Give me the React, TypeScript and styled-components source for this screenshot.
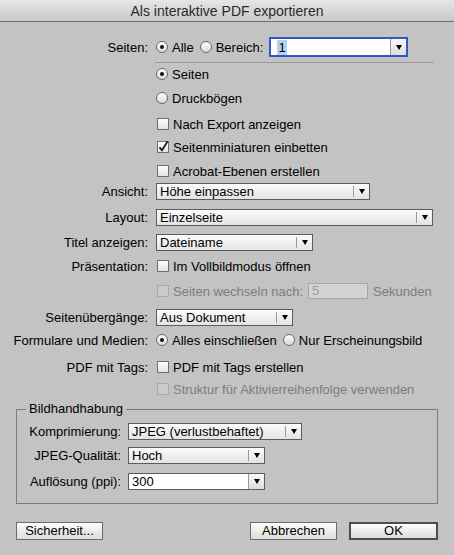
import React from 'react';
import styled, { createGlobalStyle } from 'styled-components';

const GlobalStyle = createGlobalStyle`
  body {
    margin: 0;
    background: #c3c3c3;
    font-family: "Liberation Sans", Arial, sans-serif;
    font-size: 13px;
    color: #000;
  }
`;

const Dialog = styled.div`
  width: 454px;
  height: 555px;
  background: #c3c3c3;
  overflow: hidden;
`;

const TitleBar = styled.div`
  height: 21px;
  border-bottom: 1px solid #6f6f6f;
  background: linear-gradient(#e6e6e6, #c9c9c9);
  display: flex;
  align-items: center;
  justify-content: center;
  font-size: 14px;
  color: #2a2a2a;
`;

const Body = styled.div`
  padding-top: 15px;
`;

const Row = styled.div<{ $mt?: number; $h?: number }>`
  display: grid;
  grid-template-columns: 148px 1fr;
  column-gap: 8px;
  align-items: center;
  height: ${p => p.$h ?? 20}px;
  margin-top: ${p => p.$mt ?? 0}px;
`;

const GroupRow = styled(Row)`
  grid-template-columns: 104px 1fr;
  column-gap: 7px;
`;

const Label = styled.div`
  text-align: right;
  white-space: nowrap;
`;

const Controls = styled.div<{ $gap?: number }>`
  display: flex;
  align-items: center;
  gap: ${p => p.$gap ?? 6}px;
  white-space: nowrap;
`;

const Separator = styled.div`
  margin: 5px 20px 0 155px;
  border-top: 1px solid #999;
`;

const Option = styled.label<{ $disabled?: boolean }>`
  display: inline-flex;
  align-items: center;
  gap: 4px;
  color: ${p => (p.$disabled ? '#7d7d7d' : '#000')};
`;

const RadioCircle = styled.span`
  width: 10px;
  height: 10px;
  border: 1px solid #6a6a6a;
  border-radius: 50%;
  background: linear-gradient(#fdfdfd, #dadada);
  display: inline-flex;
  align-items: center;
  justify-content: center;
  flex-shrink: 0;
`;

const RadioDot = styled.span`
  width: 4px;
  height: 4px;
  border-radius: 50%;
  background: #111;
`;

const CheckBox = styled.span<{ $disabled?: boolean }>`
  width: 10px;
  height: 10px;
  margin-left: 1px;
  border: 1px solid ${p => (p.$disabled ? '#a9a9a9' : '#6e6e6e')};
  background: ${p => (p.$disabled ? '#cbcbcb' : 'linear-gradient(#fdfdfd, #e2e2e2)')};
  display: inline-flex;
  flex-shrink: 0;
  overflow: visible;
`;

const SelectBox = styled.div<{ $w: number; $white?: boolean }>`
  width: ${p => p.$w}px;
  height: 17px;
  box-sizing: border-box;
  border: 1px solid #5c5c5c;
  background: ${p => (p.$white ? '#fff' : 'linear-gradient(#fbfbfb, #e4e4e4)')};
  display: flex;
  align-items: center;
`;

const SelectText = styled.span`
  flex: 1;
  padding-left: 3px;
  white-space: nowrap;
  overflow: hidden;
`;

const ArrowPart = styled.span<{ $filled?: boolean }>`
  width: 15px;
  align-self: stretch;
  margin: ${p => (p.$filled ? '0' : '2px 0')};
  border-left: 1px solid #9a9a9a;
  background: ${p => (p.$filled ? 'linear-gradient(#f8f8f8, #dedede)' : 'transparent')};
  display: flex;
  align-items: center;
  justify-content: center;
`;

const Triangle = styled.span`
  width: 0;
  height: 0;
  border-left: 3.5px solid transparent;
  border-right: 3.5px solid transparent;
  border-top: 5px solid #000;
`;

const RangeField = styled.div`
  width: 139px;
  height: 20px;
  box-sizing: border-box;
  border: 2px solid #3257c8;
  background: #fff;
  display: flex;
  align-items: center;
`;

const Selected = styled.span`
  margin-left: 3px;
  padding: 0 1px;
  background: #b7cff5;
`;

const SecondsField = styled.div`
  width: 60px;
  height: 16px;
  box-sizing: border-box;
  border: 1px solid #a6a6a6;
  background: #d3d3d3;
  color: #9a9a9a;
  padding-left: 3px;
  line-height: 14px;
`;

const Muted = styled.span`
  color: #7d7d7d;
`;

const Group = styled.fieldset`
  margin: 2px 16px 0;
  padding: 4px 0 12px;
  border: 1px solid #7c7c7c;
  min-width: 0;
`;

const Legend = styled.legend`
  margin-left: 9px;
  padding: 0 3px;
  line-height: 16px;
`;

const ButtonBar = styled.div`
  display: flex;
  align-items: center;
  padding: 18px 16px 0;
  gap: 12px;
`;

const Button = styled.button<{ $w: number; $default?: boolean; $push?: boolean }>`
  width: ${p => p.$w}px;
  height: 18px;
  box-sizing: border-box;
  padding: 0;
  margin-left: ${p => (p.$push ? 'auto' : '0')};
  border: ${p => (p.$default ? '2px solid #4d4d4d' : '1px solid #6c6c6c')};
  border-radius: 0;
  background: linear-gradient(#fdfdfd, #dcdcdc);
  font-family: "Liberation Sans", Arial, sans-serif;
  font-size: 13px;
  color: #000;
  line-height: 14px;
`;

const Radio: React.FC<{ checked?: boolean; children: React.ReactNode }> = ({ checked, children }) => (
  <Option>
    <RadioCircle>{checked && <RadioDot />}</RadioCircle>
    {children}
  </Option>
);

const Check: React.FC<{ checked?: boolean; disabled?: boolean; children: React.ReactNode }> = ({
  checked,
  disabled,
  children,
}) => (
  <Option $disabled={disabled}>
    <CheckBox $disabled={disabled}>
      {checked && (
        <svg width="10" height="10" viewBox="0 0 10 10" style={{ overflow: 'visible' }}>
          <path d="M1.5 5.2 L4 8.3 L9.6 -0.6" fill="none" stroke="#111" strokeWidth="1.7" />
        </svg>
      )}
    </CheckBox>
    {children}
  </Option>
);

const Select: React.FC<{ w: number; value: string; white?: boolean }> = ({ w, value, white }) => (
  <SelectBox $w={w} $white={white}>
    <SelectText>{value}</SelectText>
    <ArrowPart $filled={white}>
      <Triangle />
    </ArrowPart>
  </SelectBox>
);

export default function App() {
  return (
    <Dialog>
      <GlobalStyle />
      <TitleBar>Als interaktive PDF exportieren</TitleBar>
      <Body>
        <Row>
          <Label>Seiten:</Label>
          <Controls>
            <Radio checked>Alle</Radio>
            <Radio>Bereich:</Radio>
            <RangeField>
              <SelectText>
                <Selected>1</Selected>
              </SelectText>
              <ArrowPart $filled>
                <Triangle />
              </ArrowPart>
            </RangeField>
          </Controls>
        </Row>
        <Separator />
        <Row $mt={1}>
          <span />
          <Controls>
            <Radio checked>Seiten</Radio>
          </Controls>
        </Row>
        <Row $mt={4}>
          <span />
          <Controls>
            <Radio>Druckbögen</Radio>
          </Controls>
        </Row>
        <Row $mt={6}>
          <span />
          <Controls>
            <Check>Nach Export anzeigen</Check>
          </Controls>
        </Row>
        <Row $mt={3}>
          <span />
          <Controls>
            <Check checked>Seitenminiaturen einbetten</Check>
          </Controls>
        </Row>
        <Row $mt={4}>
          <span />
          <Controls>
            <Check>Acrobat-Ebenen erstellen</Check>
          </Controls>
        </Row>
        <Row>
          <Label>Ansicht:</Label>
          <Controls>
            <Select w={214} value="Höhe einpassen" />
          </Controls>
        </Row>
        <Row $mt={6}>
          <Label>Layout:</Label>
          <Controls>
            <Select w={277} value="Einzelseite" />
          </Controls>
        </Row>
        <Row $mt={5}>
          <Label>Titel anzeigen:</Label>
          <Controls>
            <Select w={157} value="Dateiname" />
          </Controls>
        </Row>
        <Row $mt={4}>
          <Label>Präsentation:</Label>
          <Controls>
            <Check>Im Vollbildmodus öffnen</Check>
          </Controls>
        </Row>
        <Row $mt={5}>
          <span />
          <Controls $gap={5}>
            <Check disabled>Seiten wechseln nach:</Check>
            <SecondsField>5</SecondsField>
            <Muted>Sekunden</Muted>
          </Controls>
        </Row>
        <Row $mt={6}>
          <Label>Seitenübergänge:</Label>
          <Controls>
            <Select w={137} value="Aus Dokument" />
          </Controls>
        </Row>
        <Row $mt={3}>
          <Label>Formulare und Medien:</Label>
          <Controls>
            <Radio checked>Alles einschließen</Radio>
            <Radio>Nur Erscheinungsbild</Radio>
          </Controls>
        </Row>
        <Row $mt={7}>
          <Label>PDF mit Tags:</Label>
          <Controls>
            <Check>PDF mit Tags erstellen</Check>
          </Controls>
        </Row>
        <Row $mt={2}>
          <span />
          <Controls>
            <Check disabled>Struktur für Aktivierreihenfolge verwenden</Check>
          </Controls>
        </Row>
        <Group>
          <Legend>Bildhandhabung</Legend>
          <GroupRow>
            <Label>Komprimierung:</Label>
            <Controls>
              <Select w={174} value="JPEG (verlustbehaftet)" />
            </Controls>
          </GroupRow>
          <GroupRow $mt={4}>
            <Label>JPEG-Qualität:</Label>
            <Controls>
              <Select w={137} value="Hoch" />
            </Controls>
          </GroupRow>
          <GroupRow $mt={6}>
            <Label>Auflösung (ppi):</Label>
            <Controls>
              <Select w={137} value="300" white />
            </Controls>
          </GroupRow>
        </Group>
        <ButtonBar>
          <Button $w={87}>Sicherheit...</Button>
          <Button $w={87} $push>
            Abbrechen
          </Button>
          <Button $w={89} $default>
            OK
          </Button>
        </ButtonBar>
      </Body>
    </Dialog>
  );
}
